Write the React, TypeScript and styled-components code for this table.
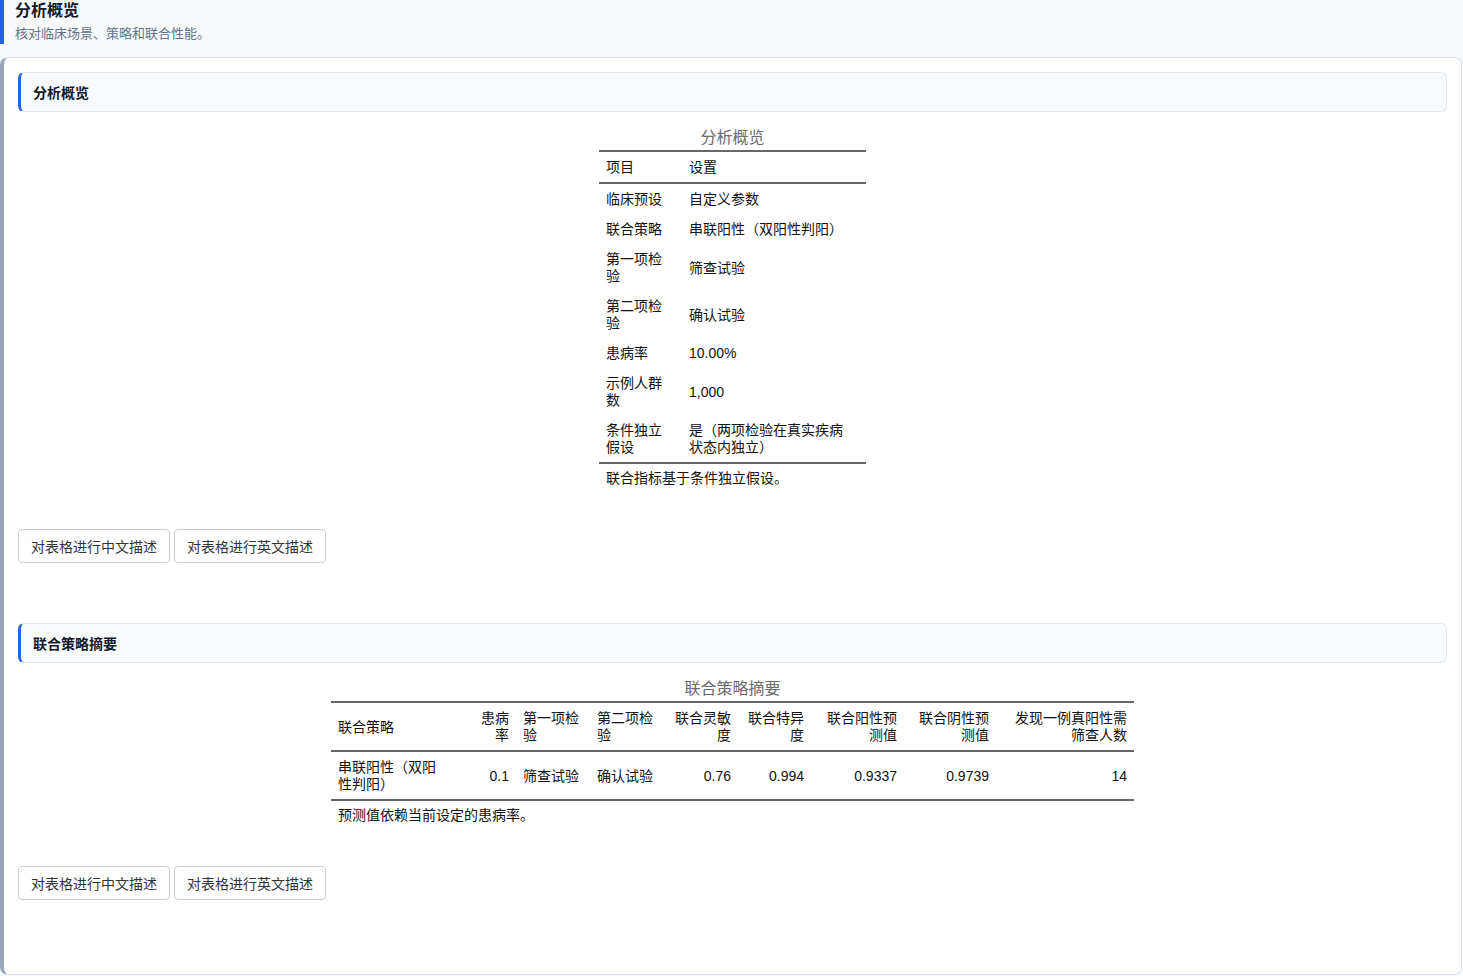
import React from "react";
import styled, { createGlobalStyle } from "styled-components";

const Global = createGlobalStyle`
  html, body { margin: 0; padding: 0; background: #f7f9fc; }
  body { font-family: "Liberation Sans", "Noto Sans CJK SC", sans-serif; color: #111; }
  * { box-sizing: border-box; }
`;

const Page = styled.div`
  width: 1463px;
  min-height: 976px;
  background: #f7f9fc;
`;

const TopHeader = styled.header`
  height: 44px;
  border-left: 4px solid #2563eb;
  padding: 0 0 0 11px;
  display: flex;
  flex-direction: column;
`;

const TopTitle = styled.h1`
  margin: 0;
  font-size: 16px;
  line-height: 22px;
  font-weight: 700;
  color: #111827;
`;

const TopSub = styled.div`
  margin-top: 3px;
  font-size: 13px;
  line-height: 18px;
  color: #64748b;
`;

const Card = styled.main`
  margin-top: 13px;
  width: 1462px;
  background: #fff;
  border: 1px solid #dbe3ee;
  border-left: 4px solid #9aa6bc;
  border-radius: 8px;
  padding: 14px 14px 74px 14px;
  display: flex;
  flex-direction: column;
`;

const SectionHeader = styled.div<{ $top?: number }>`
  margin-top: ${(p) => p.$top ?? 0}px;
  height: 40px;
  display: flex;
  align-items: center;
  background: #f8fafc;
  border: 1px solid #e2e8f0;
  border-left: 3px solid #2563eb;
  border-radius: 6px;
  padding-left: 12px;
  font-size: 14px;
  font-weight: 700;
  color: #111827;
`;

const TableWrap = styled.div`
  margin-top: 15px;
  display: flex;
  justify-content: center;
`;

const Table = styled.table<{ $w: number }>`
  width: ${(p) => p.$w}px;
  table-layout: fixed;
  border-collapse: collapse;
  font-size: 14px;
  line-height: 17px;
  color: #111;
`;

const Caption = styled.caption`
  caption-side: top;
  font-size: 16px;
  line-height: 22px;
  color: #6b6b6b;
  padding-bottom: 1px;
  text-align: center;
`;

const THead = styled.thead`
  border-top: 2px solid #666;
  border-bottom: 2px solid #666;
`;

const TBody = styled.tbody`
  border-bottom: 2px solid #666;
`;

const Th = styled.th<{ $align?: string }>`
  font-weight: 400;
  text-align: ${(p) => p.$align ?? "left"};
  vertical-align: middle;
  padding: 7px 7px 6px;
`;

const Td = styled.td<{ $align?: string }>`
  text-align: ${(p) => p.$align ?? "left"};
  vertical-align: middle;
  padding: 7px 7px 6px;
`;

const FootTd = styled.td`
  text-align: left;
  padding: 6px 7px 7px;
  white-space: nowrap;
`;

const ButtonRow = styled.div`
  margin-top: 35px;
  display: flex;
  gap: 4px;
`;

const Button = styled.button`
  height: 34px;
  padding: 0 12px;
  background: #fff;
  border: 1px solid #cccccc;
  border-radius: 4px;
  font-family: "Liberation Sans", "Noto Sans CJK SC", sans-serif;
  font-size: 14px;
  color: #333;
  cursor: pointer;
`;

const Lines: React.FC<{ v: string | string[] }> = ({ v }) => {
  const arr = Array.isArray(v) ? v : [v];
  return (
    <>
      {arr.map((s, i) => (
        <React.Fragment key={i}>
          {i > 0 && <br />}
          {s}
        </React.Fragment>
      ))}
    </>
  );
};

const overviewRows: [string | string[], string | string[]][] = [
  ["临床预设", "自定义参数"],
  ["联合策略", "串联阳性（双阳性判阳）"],
  [["第一项检", "验"], "筛查试验"],
  [["第二项检", "验"], "确认试验"],
  ["患病率", "10.00%"],
  [["示例人群", "数"], "1,000"],
  [["条件独立", "假设"], ["是（两项检验在真实疾病", "状态内独立）"]],
];

type Col = { label: string[]; w: number; align: string };
const summaryCols: Col[] = [
  { label: ["联合策略"], w: 136, align: "left" },
  { label: ["患病", "率"], w: 49, align: "right" },
  { label: ["第一项检", "验"], w: 74, align: "left" },
  { label: ["第二项检", "验"], w: 74, align: "left" },
  { label: ["联合灵敏", "度"], w: 74, align: "right" },
  { label: ["联合特异", "度"], w: 73, align: "right" },
  { label: ["联合阳性预", "测值"], w: 93, align: "right" },
  { label: ["联合阴性预", "测值"], w: 92, align: "right" },
  { label: ["发现一例真阳性需", "筛查人数"], w: 138, align: "right" },
];

const summaryRow: (string | string[])[] = [
  ["串联阳性（双阳", "性判阳）"],
  "0.1",
  "筛查试验",
  "确认试验",
  "0.76",
  "0.994",
  "0.9337",
  "0.9739",
  "14",
];

const Buttons = () => (
  <ButtonRow>
    <Button>对表格进行中文描述</Button>
    <Button>对表格进行英文描述</Button>
  </ButtonRow>
);

export default function App() {
  return (
    <Page>
      <Global />
      <TopHeader>
        <TopTitle>分析概览</TopTitle>
        <TopSub>核对临床场景、策略和联合性能。</TopSub>
      </TopHeader>
      <Card>
        <SectionHeader>分析概览</SectionHeader>
        <TableWrap>
          <Table $w={267}>
            <Caption>分析概览</Caption>
            <colgroup>
              <col style={{ width: 83 }} />
              <col style={{ width: 184 }} />
            </colgroup>
            <THead>
              <tr>
                <Th>项目</Th>
                <Th>设置</Th>
              </tr>
            </THead>
            <TBody>
              {overviewRows.map((r, i) => (
                <tr key={i}>
                  <Td>
                    <Lines v={r[0]} />
                  </Td>
                  <Td>
                    <Lines v={r[1]} />
                  </Td>
                </tr>
              ))}
            </TBody>
            <tfoot>
              <tr>
                <FootTd colSpan={2}>联合指标基于条件独立假设。</FootTd>
              </tr>
            </tfoot>
          </Table>
        </TableWrap>
        <Buttons />

        <SectionHeader $top={60}>联合策略摘要</SectionHeader>
        <TableWrap>
          <Table $w={803}>
            <Caption>联合策略摘要</Caption>
            <colgroup>
              {summaryCols.map((c, i) => (
                <col key={i} style={{ width: c.w }} />
              ))}
            </colgroup>
            <THead>
              <tr>
                {summaryCols.map((c, i) => (
                  <Th key={i} $align={c.align}>
                    <Lines v={c.label} />
                  </Th>
                ))}
              </tr>
            </THead>
            <TBody>
              <tr>
                {summaryRow.map((v, i) => (
                  <Td key={i} $align={summaryCols[i].align}>
                    <Lines v={v} />
                  </Td>
                ))}
              </tr>
            </TBody>
            <tfoot>
              <tr>
                <FootTd colSpan={9}>预测值依赖当前设定的患病率。</FootTd>
              </tr>
            </tfoot>
          </Table>
        </TableWrap>
        <Buttons />
      </Card>
    </Page>
  );
}
